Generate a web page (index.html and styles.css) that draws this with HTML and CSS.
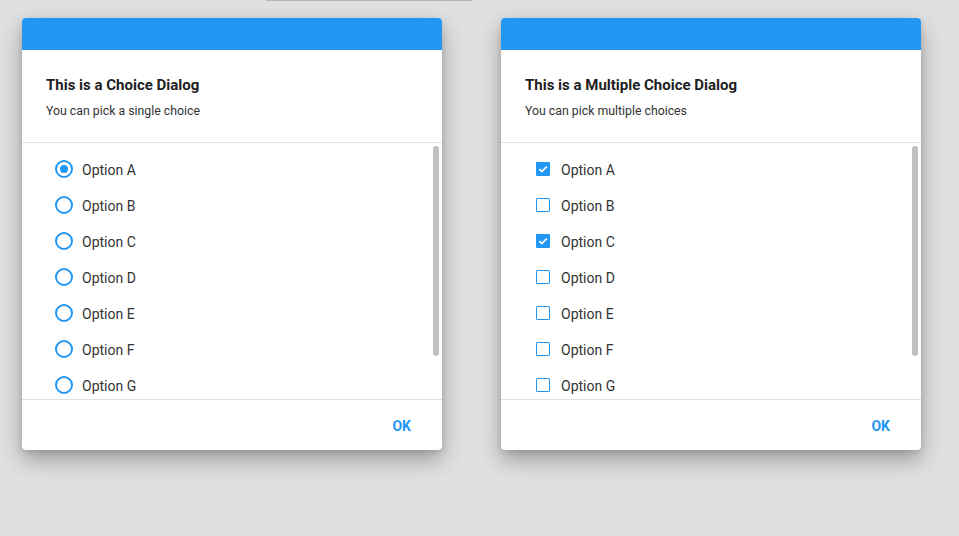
FILE: index.html
```html
<!DOCTYPE html>
<html>
<head>
<meta charset="utf-8">
<link rel="stylesheet" href="styles.css">
</head>
<body>
<div class="topline"></div>
<div class="row">
  <div class="dialog">
    <div class="bar"></div>
    <div class="head">
      <div class="title">This is a Choice Dialog</div>
      <div class="sub">You can pick a single choice</div>
    </div>
    <div class="list">
      <div class="items">
        <div class="opt"><span class="radio on"></span><span class="lbl">Option A</span></div>
        <div class="opt"><span class="radio"></span><span class="lbl">Option B</span></div>
        <div class="opt"><span class="radio"></span><span class="lbl">Option C</span></div>
        <div class="opt"><span class="radio"></span><span class="lbl">Option D</span></div>
        <div class="opt"><span class="radio"></span><span class="lbl">Option E</span></div>
        <div class="opt"><span class="radio"></span><span class="lbl">Option F</span></div>
        <div class="opt"><span class="radio"></span><span class="lbl">Option G</span></div>
      </div>
      <div class="scroll"></div>
    </div>
    <div class="foot"><span class="ok">OK</span></div>
  </div>
  <div class="dialog">
    <div class="bar"></div>
    <div class="head">
      <div class="title">This is a Multiple Choice Dialog</div>
      <div class="sub">You can pick multiple choices</div>
    </div>
    <div class="list">
      <div class="items">
        <div class="opt"><span class="box"><span class="check on"><svg viewBox="0 0 14 14" width="14" height="14"><path d="M3.3 7.2 L5.8 9.6 L10.8 4.6" fill="none" stroke="#fff" stroke-width="1.8"/></svg></span></span><span class="lbl">Option A</span></div>
        <div class="opt"><span class="box"><span class="check"></span></span><span class="lbl">Option B</span></div>
        <div class="opt"><span class="box"><span class="check on"><svg viewBox="0 0 14 14" width="14" height="14"><path d="M3.3 7.2 L5.8 9.6 L10.8 4.6" fill="none" stroke="#fff" stroke-width="1.8"/></svg></span></span><span class="lbl">Option C</span></div>
        <div class="opt"><span class="box"><span class="check"></span></span><span class="lbl">Option D</span></div>
        <div class="opt"><span class="box"><span class="check"></span></span><span class="lbl">Option E</span></div>
        <div class="opt"><span class="box"><span class="check"></span></span><span class="lbl">Option F</span></div>
        <div class="opt"><span class="box"><span class="check"></span></span><span class="lbl">Option G</span></div>
      </div>
      <div class="scroll"></div>
    </div>
    <div class="foot"><span class="ok">OK</span></div>
  </div>
</div>
</body>
</html>
```
FILE: styles.css
```css
html, body {
  margin: 0;
  padding: 0;
}
body {
  background: #e0e0e0;
  font-family: Roboto, "Liberation Sans", sans-serif;
  width: 959px;
  height: 536px;
  overflow: hidden;
}
.topline {
  height: 1px;
  width: 206px;
  margin-left: 266px;
  background: #b5b5b5;
}
.row {
  display: flex;
  gap: 59px;
  padding: 17px 0 0 22px;
}
.dialog {
  width: 420px;
  height: 432px;
  background: #fff;
  border-radius: 4px;
  overflow: hidden;
  box-shadow: 0 10px 22px rgba(0,0,0,0.3), 0 2px 6px rgba(0,0,0,0.12);
  display: flex;
  flex-direction: column;
}
.bar {
  height: 32px;
  background: #2196f3;
  flex: none;
}
.head {
  padding: 25px 24px 23px;
  border-bottom: 1px solid #e0e0e0;
  flex: none;
}
.title {
  font-size: 15px;
  font-weight: 700;
  line-height: 20px;
  color: #212121;
  margin-bottom: 8px;
}
.sub {
  font-size: 12.3px;
  line-height: 16px;
  color: #333;
}
.list {
  height: 256px;
  display: flex;
  overflow: hidden;
  border-bottom: 1px solid #e0e0e0;
  flex: none;
}
.items {
  flex: 1;
  padding: 8px 0 0 33px;
}
.opt {
  height: 36px;
  display: flex;
  align-items: center;
}
.lbl {
  font-size: 14px;
  color: #333;
  margin-left: 9px;
  padding-top: 2px;
}
.radio {
  width: 18px;
  height: 18px;
  box-sizing: border-box;
  border: 2px solid #2196f3;
  border-radius: 50%;
  display: flex;
  align-items: center;
  justify-content: center;
}
.radio.on::after {
  content: "";
  width: 8px;
  height: 8px;
  border-radius: 50%;
  background: #2196f3;
}
.box {
  width: 18px;
  height: 18px;
  display: flex;
  align-items: center;
  justify-content: center;
}
.check {
  width: 14px;
  height: 14px;
  box-sizing: border-box;
  border: 1.5px solid #2196f3;
  border-radius: 1px;
  display: flex;
}
.check.on {
  border: none;
  background: #2196f3;
}
.scroll {
  width: 6px;
  height: 210px;
  margin: 3px 3px 0 0;
  border-radius: 3px;
  background: #c1c1c1;
  flex: none;
}
.foot {
  flex: 1;
  display: flex;
  align-items: center;
  justify-content: flex-end;
  padding: 2px 31px 0 0;
}
.ok {
  font-size: 14px;
  font-weight: 700;
  color: #2196f3;
}
```
